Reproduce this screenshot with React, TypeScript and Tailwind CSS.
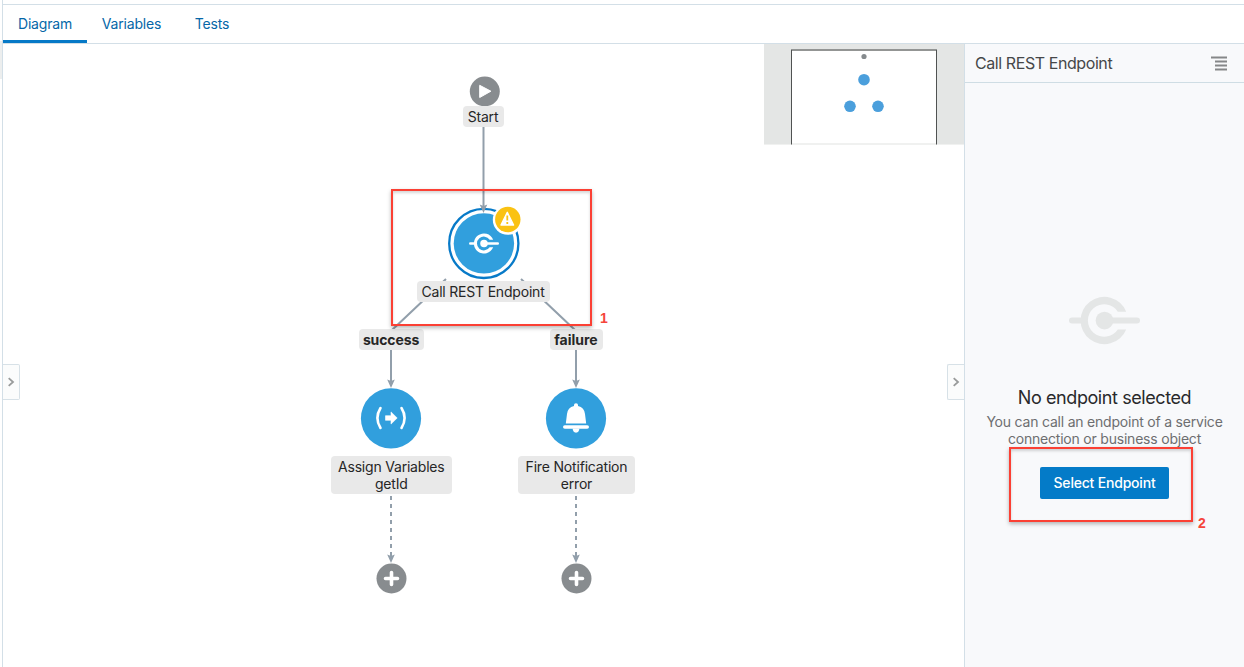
import React from 'react';

function EndpointIcon({ className }: { className: string }) {
  return (
    <svg viewBox="0 0 72 50" className={className} fill="none" stroke="currentColor">
      <path d="M3 25H15" strokeWidth="6" strokeLinecap="round" />
      <path d="M36 25H69" strokeWidth="6" strokeLinecap="round" />
      <circle cx="36" cy="25" r="9" fill="currentColor" stroke="none" />
      <path
        d="M49.5 16H58A24 24 0 1 0 58 34H49.5A16.5 16.5 0 1 1 49.5 16Z"
        fill="currentColor"
        stroke="none"
      />
    </svg>
  );
}

function NodeLabel({ className, children }: { className: string; children: React.ReactNode }) {
  return (
    <div
      className={`absolute flex items-center justify-center rounded-[4px] bg-[#e9e9e9] text-center text-[14px] leading-[17px] whitespace-nowrap text-[#262626] ${className}`}
    >
      {children}
    </div>
  );
}

function Callout({ className, children, labelClass }: { className: string; labelClass: string; children: React.ReactNode }) {
  return (
    <div className={`pointer-events-none absolute border-2 border-[#fb4034] shadow-[0_2px_4px_rgba(0,0,0,0.28),inset_0_2px_3px_rgba(0,0,0,0.16)] ${className}`}>
      <span className={`absolute font-['Liberation_Sans',sans-serif] text-[14px] leading-4 font-bold text-[#f5453b] ${labelClass}`}>
        {children}
      </span>
    </div>
  );
}

function Chevron() {
  return (
    <svg viewBox="0 0 8 10" className="h-[10px] w-2" fill="none" stroke="#999b9b" strokeWidth="1.8">
      <path d="M1.7 1.2L6 5L1.7 8.8" />
    </svg>
  );
}

function AddButton({ x }: { x: number }) {
  return (
    <g>
      <circle cx={x} cy="578.5" r="15" fill="#888c8f" />
      <path d={`M${x - 6} 578.5h12M${x} 572.5v12`} stroke="#fff" strokeWidth="3.6" strokeLinecap="round" />
    </g>
  );
}

function Arrow({ x, y }: { x: number; y: number }) {
  return <path d={`M${x - 3.8} ${y - 8.5}L${x} ${y - 7}L${x + 3.8} ${y - 8.5}L${x} ${y}Z`} fill="#929fab" />;
}

function Diagram() {
  return (
    <svg viewBox="3 44 961 623" className="absolute inset-0 h-[623px] w-[961px]">
      <g stroke="#929fab" strokeWidth="2" fill="none">
        <path d="M483.5 106V206" />
        <path d="M446 279L391 331V382" />
        <path d="M521 279L576 331V382" />
        <path d="M391 496V556M576 496V556" strokeDasharray="4 4" />
      </g>
      <Arrow x={391} y={388} />
      <Arrow x={576} y={388} />
      <Arrow x={391} y={563} />
      <Arrow x={576} y={563} />
      <circle cx="484.8" cy="91.5" r="15" fill="#888c8f" />
      <path d="M479.7 85.3L490.9 91.2L479.7 97.5Z" fill="#fff" stroke="#fff" strokeWidth="1" strokeLinejoin="round" />
      <circle cx="483.8" cy="243.4" r="34.6" fill="#fff" stroke="#077ac8" strokeWidth="2.3" />
      <circle cx="483.9" cy="243.4" r="30.2" fill="#319fdd" />
      <Arrow x={483.5} y={213} />
      <circle cx="507.8" cy="219.8" r="15" fill="#fff" />
      <circle cx="507.8" cy="219.5" r="12.7" fill="#fac213" />
      <path d="M507.3 212.3L513.6 225H501Z" fill="#fff" stroke="#fff" strokeWidth="1.4" strokeLinejoin="round" />
      <path d="M507.3 215.5V220.5M507.3 222V224" stroke="#fac213" strokeWidth="1.8" />
      <circle cx="391" cy="418.4" r="30.1" fill="#319fdd" />
      <g fill="none" stroke="#fff" strokeWidth="2.6" strokeLinecap="round">
        <path d="M380.5 408Q374.3 418 380.5 428" />
        <path d="M401.5 408Q407.7 418 401.5 428" />
      </g>
      <path d="M385.5 415.7H391V411.9L397.2 418L391 424.1V420.3H385.5Z" fill="#fff" stroke="#fff" strokeWidth=".6" strokeLinejoin="round" />
      <circle cx="576" cy="418.4" r="30.1" fill="#319fdd" />
      <g fill="#fff">
        <path d="M574 406V405Q574 403.2 576 403.2T578 405V406Q584.4 407.6 585 414L586.2 423.4H565.8L567 414Q567.6 407.6 574 406Z" />
        <rect x="563" y="425.2" width="26" height="3.6" rx="1.8" />
        <path d="M572.8 428.5H579.2V430Q578.4 432.8 576 432.8T572.8 430Z" />
      </g>
      <AddButton x={391.5} />
      <AddButton x={576.5} />
    </svg>
  );
}

export default function App() {
  return (
    <div className="relative flex h-[667px] w-[1244px] overflow-hidden bg-white font-['Inter',sans-serif] text-[#262626]">
      <div className="w-[3px] shrink-0 border-r border-[#d3dfe7] pt-[41px]">
        <div className="h-[38px] bg-[#eceeee]" />
      </div>
      <div className="flex min-w-0 flex-1 flex-col">
        <nav className="mt-1 flex h-10 shrink-0 border-y border-[#d3dfe7] text-[14px] leading-5 text-[#0567a8]">
          <div className="flex h-[38px] w-[84px] justify-center border-b-3 border-[#0679c7] pt-[9px] tracking-[-0.18px]">Diagram</div>
          <div className="w-[89px] pt-[9px] text-center tracking-[-0.15px]">Variables</div>
          <div className="w-[72px] pt-[9px] text-center tracking-[-0.15px]">Tests</div>
        </nav>
        <div className="flex min-h-0 flex-1">
          <main className="relative w-[961px] shrink-0">
            <Diagram />
            <EndpointIcon className="absolute top-[188.5px] left-[466px] h-[21px] w-[30px] text-white" />
            <NodeLabel className="top-[62px] left-[460px] h-[21px] w-[41px]">
              <span className="-ml-px tracking-[-0.2px]">Start</span>
            </NodeLabel>
            <NodeLabel className="top-[237px] left-[414px] h-[21px] w-[133px]">
              <span className="-ml-px tracking-[-0.2px]">Call REST Endpoint</span>
            </NodeLabel>
            <NodeLabel className="top-[285px] left-[356px] h-[21px] w-[65px] font-bold">
              <span className="-ml-px tracking-[-0.12px]">success</span>
            </NodeLabel>
            <NodeLabel className="top-[285px] left-[547px] h-[21px] w-[53px] font-bold">
              <span className="-ml-px">failure</span>
            </NodeLabel>
            <NodeLabel className="top-[412px] left-[328px] h-[38px] w-[120.5px]">
              <span className="tracking-[-0.2px]">Assign Variables<br />getId</span>
            </NodeLabel>
            <NodeLabel className="top-[412px] left-[515px] h-[38px] w-[117px]">
              <span className="tracking-[-0.18px]">Fire Notification<br />error</span>
            </NodeLabel>

            <div className="absolute top-0 right-0 h-[101px] w-[200px] border-b border-[#f0f1f0] bg-[#e4e6e5]">
              <svg viewBox="764 44 200 101" className="h-[101px] w-[200px]">
                <rect x="791" y="49" width="146" height="95" fill="#fff" />
                <path d="M791 50H937" stroke="#939594" strokeWidth="2" />
                <path d="M791.5 50V144.5M936.5 50V144.5" stroke="#505252" />
                <path d="M792 143.5H936" stroke="#f0f1f0" />
                <circle cx="864" cy="56.5" r="2.6" fill="#858a8d" />
                <g fill="#4b9fdc">
                  <circle cx="864" cy="79.7" r="5.8" />
                  <circle cx="850" cy="106.3" r="5.8" />
                  <circle cx="878" cy="106.3" r="5.8" />
                </g>
              </svg>
            </div>

            <button className="absolute top-[320px] left-0 flex h-9 w-[17px] items-center justify-center rounded-r-[2px] border border-l-0 border-[#d7e1e7] bg-[#fbfcfc]"><Chevron /></button>
            <button className="absolute top-[320px] right-0 flex h-9 w-[17px] items-center justify-center rounded-l-[2px] border border-r-0 border-[#d7e1e7] bg-[#fbfcfc]"><Chevron /></button>
            <Callout className="top-[145px] left-[388px] h-[137px] w-[201px]" labelClass="top-[119px] left-[207px]">1</Callout>
          </main>

          <aside className="relative flex flex-1 flex-col border-l border-[#d3dfe7] bg-[#f8f9fb]">
            <header className="flex h-[39px] shrink-0 items-center justify-between border-b border-[#cfdde4] pr-[17px] pl-[10px]">
              <h2 className="text-[16px] leading-5 tracking-[-0.42px] text-[#464749]">Call REST Endpoint</h2>
              <svg viewBox="0 0 16 16" className="mt-[2px] h-4 w-4">
                <path d="M0 1.5H16M4 5.5H16M4 9.5H16M4 13.5H16" stroke="#bfc0c1" strokeWidth="3" />
                <path d="M0 1.5H16M4 5.5H16M4 9.5H16M4 13.5H16" stroke="#858789" strokeWidth="1" />
              </svg>
            </header>
            <div className="flex flex-col items-center pt-[212px]">
              <EndpointIcon className="h-[51px] w-[71px] text-[#e4e6e6]" />
              <h3 className="mt-[40px] text-[18px] leading-6 tracking-[-0.42px] text-[#29292b]">No endpoint selected</h3>
              <p className="mt-[3px] text-center text-[14px] leading-[17px] tracking-[-0.21px] whitespace-nowrap text-[#6d6e70]">
                You can call an endpoint of a service<br />connection or business object
              </p>
              <button className="mt-[20px] h-8 w-[129px] rounded-[2px] bg-[#047bc8] pb-[2px] text-[14px] font-medium tracking-[-0.2px] text-white">Select Endpoint</button>
            </div>
            <Callout className="top-[403px] left-[44px] h-[75px] w-[184px]" labelClass="top-[66px] left-[187px]">2</Callout>
          </aside>
        </div>
      </div>
    </div>
  );
}
